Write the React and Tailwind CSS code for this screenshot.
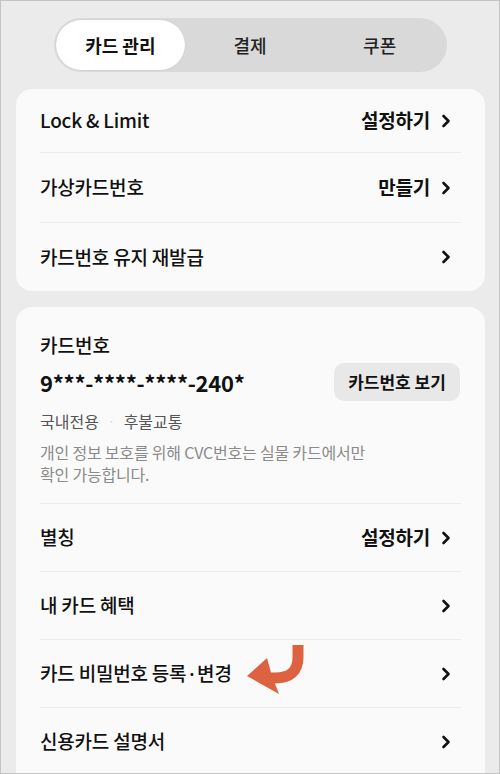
import React from "react";

const Chevron = () => (
  <svg width="10" height="14" viewBox="0 0 10 14" className="shrink-0">
    <path d="M2.5 2 L7.5 7 L2.5 12" fill="none" stroke="#111" strokeWidth="2.6" strokeLinecap="round" strokeLinejoin="round" />
  </svg>
);

const Row = ({ label, value, h = "h-[68px]", divider = true, children }) => (
  <div className={`relative flex items-center justify-between ${h} ${divider ? "border-t border-[#ececec]" : ""}`}>
    <span className="text-[19px] font-medium text-[#111] tracking-[-0.2px]">{label}</span>
    <div className="flex items-center gap-[11px] pr-[10px]">
      {value && <span className="text-[19px] font-bold text-[#111] tracking-[-0.2px]">{value}</span>}
      <Chevron />
    </div>
    {children}
  </div>
);

const Arrow = () => (
  <svg width="60" height="52" viewBox="0 0 60 52" className="absolute left-[207px] top-[5px]">
    <path d="M51 0 V12 Q51 33 28 33 H18" fill="none" stroke="#dd6340" strokeWidth="11" />
    <polygon points="0,31 20,13 25,31 32,49" fill="#dd6340" />
  </svg>
);

export default function App() {
  return (
    <div
      className="w-[500px] h-[774px] overflow-hidden bg-[#ebebeb] border border-[#c4c4c4] flex flex-col"
      style={{ fontFamily: '"Noto Sans CJK KR", "Noto Sans", sans-serif' }}
    >
      <div className="flex justify-center pt-[17px]">
        <div className="w-[393px] h-[54px] rounded-full bg-[#d9d9d9] grid grid-cols-3 p-[2px]">
          <div className="rounded-full bg-white flex items-center justify-center shadow-[0_0_1px_rgba(0,0,0,0.15)]">
            <span className="text-[18px] font-bold text-[#111]">카드 관리</span>
          </div>
          <div className="flex items-center justify-center">
            <span className="text-[18px] font-medium text-[#222]">결제</span>
          </div>
          <div className="flex items-center justify-center">
            <span className="text-[18px] font-medium text-[#222]">쿠폰</span>
          </div>
        </div>
      </div>

      <div className="mx-[15px] w-[469px] mt-[17px] rounded-[16px] bg-[#fafafa] px-[24px]">
        <Row label="Lock & Limit" value="설정하기" h="h-[63px]" divider={false} />
        <Row label="가상카드번호" value="만들기" h="h-[70px]" />
        <Row label="카드번호 유지 재발급" h="h-[69px]" />
      </div>

      <div className="mx-[15px] w-[469px] mt-[16px] rounded-t-[16px] bg-[#fafafa] px-[24px] flex-1">
        <div className="pt-[24px] pb-[18px]">
          <div className="text-[19px] font-medium text-[#111] leading-[28px]">카드번호</div>
          <div className="flex items-center justify-between mt-[4px]">
            <span className="text-[22px] font-bold text-[#111] tracking-[-0.3px]">9***-****-****-240*</span>
            <button className="w-[126px] h-[38px] rounded-[10px] bg-[#e8e8e8] text-[17px] font-bold text-[#111] mr-[1px]">
              카드번호 보기
            </button>
          </div>
          <div className="flex items-center mt-[7px] text-[16px] text-[#555] leading-[26px]">
            <span>국내전용</span>
            <span className="mx-[9px] text-[#cfcfcf] text-[12px]">·</span>
            <span>후불교통</span>
          </div>
          <div className="mt-[7px] text-[16px] text-[#8a8a8a] leading-[22px] tracking-[-0.2px]">
            개인 정보 보호를 위해 CVC번호는 실물 카드에서만
            <br />
            확인 가능합니다.
          </div>
        </div>
        <Row label="별칭" value="설정하기" />
        <Row label="내 카드 혜택" />
        <Row label="카드 비밀번호 등록·변경">
          <Arrow />
        </Row>
        <Row label="신용카드 설명서" />
      </div>
    </div>
  );
}
